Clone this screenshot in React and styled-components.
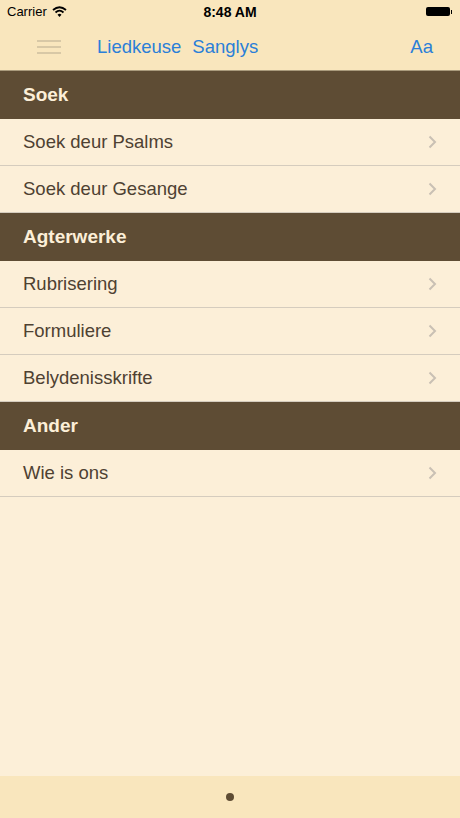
import React from "react";
import styled, { createGlobalStyle } from "styled-components";

const GlobalStyle = createGlobalStyle`
  html, body {
    margin: 0;
    padding: 0;
    background: #fcefd8;
  }
  body {
    font-family: "Liberation Sans", Arial, sans-serif;
  }
`;

const Screen = styled.div`
  width: 460px;
  height: 818px;
  display: flex;
  flex-direction: column;
  background: #fcefd8;
  overflow: hidden;
`;

const TopBar = styled.header`
  background: #f9e6bd;
  border-bottom: 1px solid #a99a7c;
  height: 70px;
  display: flex;
  flex-direction: column;
`;

const StatusBar = styled.div`
  height: 23px;
  display: grid;
  grid-template-columns: 1fr auto 1fr;
  align-items: center;
  padding: 0 7px;
  font-size: 13px;
  color: #000;
`;

const Carrier = styled.div`
  display: flex;
  align-items: center;
  gap: 5px;
`;

const Clock = styled.div`
  font-weight: bold;
  font-size: 14px;
`;

const Battery = styled.div`
  justify-self: end;
  display: flex;
  align-items: center;
  margin-right: 1px;
  &::before {
    content: "";
    width: 24px;
    height: 9px;
    background: #000;
    border-radius: 2px;
  }
  &::after {
    content: "";
    width: 1.5px;
    height: 4px;
    background: #000;
    margin-left: 1px;
  }
`;

const NavBar = styled.nav`
  flex: 1;
  display: flex;
  align-items: center;
  padding: 0 27px 0 37px;
`;

const Hamburger = styled.div`
  width: 24px;
  display: flex;
  flex-direction: column;
  gap: 4px;
  margin-right: 36px;
  span {
    height: 2px;
    background: #d8c8a6;
  }
`;

const NavLink = styled.a`
  color: #2b7fd8;
  font-size: 18.5px;
  margin-right: ${p => p.$gap || 0}px;
  text-decoration: none;
`;

const Spacer = styled.div`
  flex: 1;
`;

const List = styled.div`
  display: flex;
  flex-direction: column;
`;

const SectionHeader = styled.div`
  height: 48px;
  background: #5e4c34;
  color: #fcefd8;
  font-size: 19px;
  font-weight: bold;
  display: flex;
  align-items: center;
  padding-left: 23px;
`;

const Row = styled.div`
  box-sizing: border-box;
  height: 47px;
  border-bottom: 1px solid #d5ccbe;
  display: flex;
  align-items: center;
  justify-content: space-between;
  padding: 0 23px 0 23px;
  color: #4e4132;
  font-size: 18.5px;
`;

const BottomBar = styled.footer`
  margin-top: auto;
  height: 42px;
  background: #f9e6bd;
  display: flex;
  align-items: center;
  justify-content: center;
`;

const Dot = styled.div`
  width: 8px;
  height: 8px;
  border-radius: 50%;
  background: #5e4c34;
`;

const Chevron = () => (
  <svg width="9" height="14" viewBox="0 0 9 14">
    <path d="M1.5 1.5 L7 7 L1.5 12.5" fill="none" stroke="#c9c0b4" strokeWidth="2" />
  </svg>
);

const Wifi = () => (
  <svg width="15" height="11" viewBox="0 0 15 11">
    <path d="M1 4 Q7.5 -1.5 14 4" fill="none" stroke="#000" strokeWidth="1.8" />
    <path d="M3.5 6.5 Q7.5 2.8 11.5 6.5" fill="none" stroke="#000" strokeWidth="1.8" />
    <path d="M5.5 8.7 L7.5 11 L9.5 8.7 Q7.5 7 5.5 8.7 Z" fill="#000" />
  </svg>
);

const sections = [
  { title: "Soek", items: ["Soek deur Psalms", "Soek deur Gesange"] },
  { title: "Agterwerke", items: ["Rubrisering", "Formuliere", "Belydenisskrifte"] },
  { title: "Ander", items: ["Wie is ons"] },
];

export default function App() {
  return (
    <>
      <GlobalStyle />
      <Screen>
        <TopBar>
          <StatusBar>
            <Carrier>
              Carrier <Wifi />
            </Carrier>
            <Clock>8:48 AM</Clock>
            <Battery />
          </StatusBar>
          <NavBar>
            <Hamburger>
              <span />
              <span />
              <span />
            </Hamburger>
            <NavLink $gap={11}>Liedkeuse</NavLink>
            <NavLink>Sanglys</NavLink>
            <Spacer />
            <NavLink>Aa</NavLink>
          </NavBar>
        </TopBar>
        <List>
          {sections.map(section => (
            <React.Fragment key={section.title}>
              <SectionHeader>{section.title}</SectionHeader>
              {section.items.map(item => (
                <Row key={item}>
                  {item}
                  <Chevron />
                </Row>
              ))}
            </React.Fragment>
          ))}
        </List>
        <BottomBar>
          <Dot />
        </BottomBar>
      </Screen>
    </>
  );
}
